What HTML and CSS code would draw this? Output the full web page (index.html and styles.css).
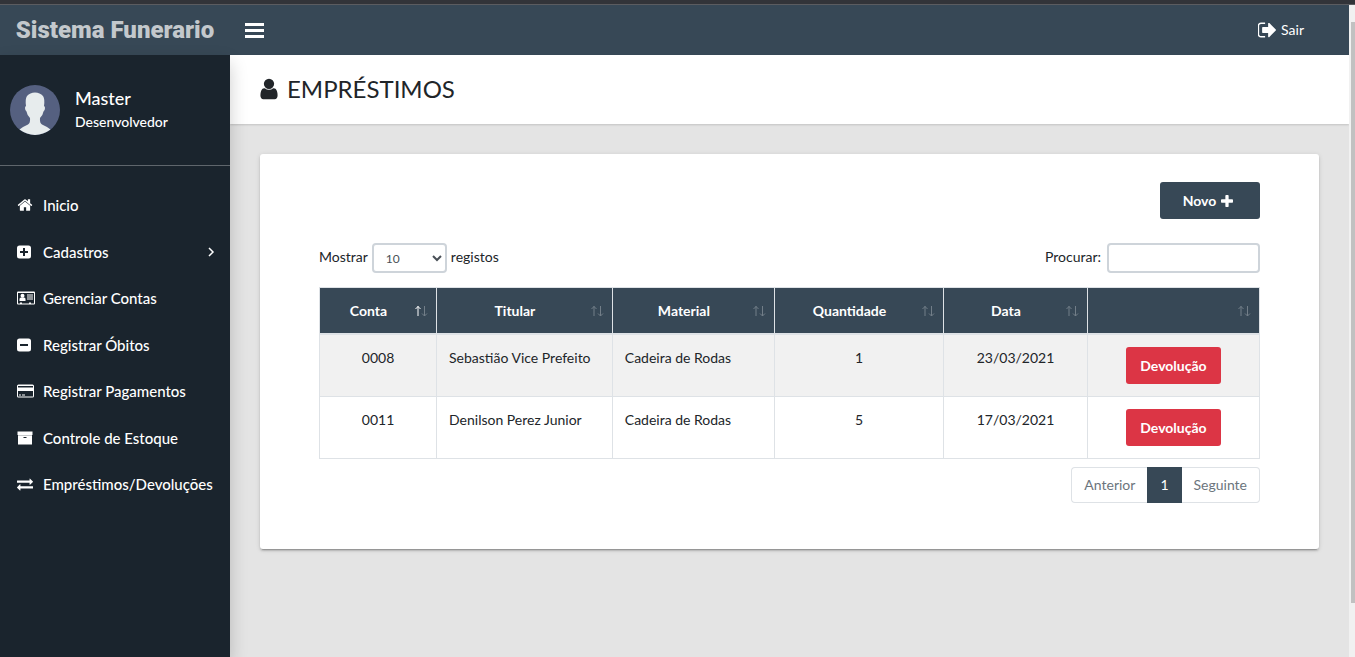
FILE: index.html
```html
<!DOCTYPE html>
<html lang="pt">
<head>
<meta charset="utf-8">
<title>Sistema Funerario</title>
<link rel="stylesheet" href="styles.css">
</head>
<body>
<div class="window-edge"></div>
<div class="viewport">
  <div class="app">
    <header class="topbar">
      <a class="logo" href="#">Sistema Funerario</a>
      <button class="toggle" type="button" aria-label="Menu">
        <svg width="19" height="15" viewBox="0 0 19 15"><path d="M0 0h19v3H0zM0 6h19v3H0zM0 12h19v3H0z"/></svg>
      </button>
      <a class="logout" href="#">
        <svg width="18" height="18" viewBox="96 128 1536 1536"><path d="M704 1440q0 4 1 20t.5 26.5-3 23.500-10 19.500-20.500 6.500h-320q-119 0-203.500-84.500t-84.500-203.500v-704q0-119 84.500-203.500t203.500-84.500h320q13 0 22.500 9.500t9.500 22.500q0 4 1 20t.5 26.500-3 23.500-10 19.500-20.500 6.500h-320q-66 0-113 47t-47 113v704q0 66 47 113t113 47h312l11.500 1 11.500 3 8 5.500 7 9 2 13.500zm928-544q0 26-19 45l-544 544q-19 19-45 19t-45-19-19-45v-288h-448q-26 0-45-19t-19-45v-384q0-26 19-45t45-19h448v-288q0-26 19-45t45-19 45 19l544 544q19 19 19 45z"/></svg>
        <span>Sair</span>
      </a>
    </header>
    <div class="body">
      <aside class="sidebar">
        <div class="user">
          <svg class="avatar" viewBox="0 0 50 50"><circle cx="25" cy="25" r="25" fill="#556080"/><path d="M9.500 44.600q3.500-3 8.500-5.100 2.500-1.500 2-6.500-3-3-3.500-6.500-1.500-1-1.500-3.500 0-1.500 1-2-1-7 1-10Q20 7.500 25 7.500t8 3.500q2 3 1 10 1 .5 1 2 0 2.500-1.500 3.500-.5 3.500-3.500 6.500-.5 5 2 6.500 5 2.100 8.500 5.100Q33 50 25 50T9.500 44.600z" fill="#e7eced"/></svg>
          <div>
            <p class="user-name">Master</p>
            <p class="user-role">Desenvolvedor</p>
          </div>
        </div>
        <nav class="menu">
          <a href="#"><span class="ico"><svg width="16" height="16" viewBox="64 0 1664 1792"><path d="M1472 992v480q0 26-19 45t-45 19h-384v-384h-256v384h-384q-26 0-45-19t-19-45v-480q0-1 .5-3t.5-3l575-474 575 474q1 2 1 6zm223-69l-62 74q-8 9-21 11h-3q-13 0-21-7l-692-577-692 577q-12 8-24 7-13-2-21-11l-62-74q-8-10-7-23.500t11-21.500l719-599q32-26 76-26t76 26l244 204v-195q0-14 9-23t23-9h192q14 0 23 9t9 23v408l219 182q10 8 11 21.500t-7 23.500z"/></svg></span>Inicio</a>
          <a href="#"><span class="ico"><svg width="14" height="14" viewBox="0 0 14 14"><path fill-rule="evenodd" d="M2.500 0.500h9q2.500 0 2.500 2.500v8q0 2.500-2.500 2.500h-9Q0 13.500 0 11V3Q0 .5 2.500.5zM6 3v3H3v2h3v3h2V8h3V6H8V3z"/></svg></span>Cadastros
            <svg class="chevron" width="8" height="12" viewBox="0 0 8 12"><path d="M2 2l4 4-4 4" fill="none" stroke="#fff" stroke-width="1.500"/></svg></a>
          <a href="#"><span class="ico"><svg width="18" height="14" viewBox="0 0 18 14"><path fill-rule="evenodd" d="M1 .5h16q1 0 1 1v11q0 1-1 1H1q-1 0-1-1v-11q0-1 1-1zM1 2v10.500h2v-1h2v1h7v-1h2v1h3V2z"/><circle cx="5.500" cy="4.800" r="2"/><path d="M2.500 10V8q0-1.500 1.500-1.500h3Q8.500 6.500 8.500 8v2zM10 3.500h6v1h-6zM10 5.500h6v1h-6zM10 7.500h6v1h-6z"/></svg></span>Gerenciar Contas</a>
          <a href="#"><span class="ico"><svg width="14" height="14" viewBox="0 0 14 14"><path fill-rule="evenodd" d="M2.500 .5h9q2.500 0 2.500 2.500v8q0 2.500-2.500 2.500h-9Q0 13.500 0 11V3Q0 .5 2.500.5zM3 6v2h8V6z"/></svg></span>Registrar Óbitos</a>
          <a href="#"><span class="ico"><svg width="17" height="14" viewBox="0 0 17 14"><path fill-rule="evenodd" d="M1.500 .5h14q1.500 0 1.500 1.500v10q0 1.500-1.500 1.500h-14Q0 13.500 0 12V2Q0 .5 1.500 .5zM1 2v1.500h15V2zM1 7v5.500h15V7zM2 10.500h2v1H2zM5 10.500h3v1H5z"/></svg></span>Registrar Pagamentos</a>
          <a href="#"><span class="ico"><svg width="16" height="14" viewBox="0 0 16 14"><path fill-rule="evenodd" d="M.5 .5h15v3.500H.5zM1 4.300h14v9.200H1zM6.500 6v1h3V6z"/></svg></span>Controle de Estoque</a>
          <a href="#"><span class="ico"><svg width="16" height="16" viewBox="0 0 1792 1792"><path d="M1792 1184v192q0 13-9.500 22.500t-22.500 9.500h-1376v192q0 13-9.500 22.500t-22.500 9.500q-12 0-24-10l-319-320q-9-9-9-22 0-14 9-23l320-320q9-9 23-9 13 0 22.500 9.500t9.500 22.500v192h1376q13 0 22.500 9.500t9.500 22.500zm0-544q0 14-9 23l-320 320q-9 9-23 9-13 0-22.500-9.500t-9.500-22.500v-192h-1376q-13 0-22.500-9.500t-9.500-22.500v-192q0-13 9.500-22.500t22.500-9.500h1376v-192q0-14 9-23t23-9q12 0 24 10l319 319q9 9 9 23z"/></svg></span>Empréstimos/Devoluções</a>
        </nav>
      </aside>
      <main class="content">
        <div class="title-bar">
          <h1><svg width="18" height="24" viewBox="256 0 1280 1792"><path d="M1536 1399q0 109-62.500 187t-150.500 78h-854q-88 0-150.500-78t-62.500-187q0-85 8.500-160.500t31.500-152 58.500-131 94-89 134.500-34.500q131 128 313 128t313-128q76 0 134.500 34.500t94 89 58.500 131 31.500 152 8.500 160.500zm-256-887q0 159-112.500 271.500t-271.500 112.500-271.500-112.500-112.500-271.500 112.500-271.500 271.500-112.500 271.500 112.500 112.500 271.500z"/></svg>EMPRÉSTIMOS</h1>
        </div>
        <section class="tile">
          <div class="actions">
            <button class="btn btn-new" type="button">Novo <svg width="12" height="12" viewBox="192 128 1408 1408"><path d="M1600 736v192q0 40-28 68t-68 28h-416v416q0 40-28 68t-68 28h-192q-40 0-68-28t-28-68v-416h-416q-40 0-68-28t-28-68v-192q0-40 28-68t68-28h416v-416q0-40 28-68t68-28h192q40 0 68 28t28 68v416h416q40 0 68 28t28 68z"/></svg></button>
          </div>
          <div class="filters">
            <label>Mostrar <select class="field length"><option>10</option><option>25</option><option>50</option></select> registos</label>
            <label class="search">Procurar: <input class="field" type="search"></label>
          </div>
          <table class="grid">
            <colgroup><col class="c-conta"><col class="c-titular"><col class="c-material"><col class="c-qtd"><col class="c-data"><col></colgroup>
            <thead>
              <tr>
                <th><div class="th asc"><span>Conta</span><svg viewBox="0 0 13 12"><path class="up" d="M3 1v10M.5 4L3 1.500 5.500 4"/><path class="down" d="M9.500 1v10M7 8.500L9.500 11 12 8.500"/></svg></div></th>
                <th><div class="th"><span>Titular</span><svg viewBox="0 0 13 12"><path class="up" d="M3 1v10M.5 4L3 1.500 5.500 4"/><path class="down" d="M9.500 1v10M7 8.500L9.500 11 12 8.500"/></svg></div></th>
                <th><div class="th"><span>Material</span><svg viewBox="0 0 13 12"><path class="up" d="M3 1v10M.5 4L3 1.500 5.500 4"/><path class="down" d="M9.500 1v10M7 8.500L9.500 11 12 8.500"/></svg></div></th>
                <th><div class="th"><span>Quantidade</span><svg viewBox="0 0 13 12"><path class="up" d="M3 1v10M.5 4L3 1.500 5.500 4"/><path class="down" d="M9.500 1v10M7 8.500L9.500 11 12 8.500"/></svg></div></th>
                <th><div class="th"><span>Data</span><svg viewBox="0 0 13 12"><path class="up" d="M3 1v10M.5 4L3 1.500 5.500 4"/><path class="down" d="M9.500 1v10M7 8.500L9.500 11 12 8.500"/></svg></div></th>
                <th><div class="th"><span></span><svg viewBox="0 0 13 12"><path class="up" d="M3 1v10M.5 4L3 1.500 5.500 4"/><path class="down" d="M9.500 1v10M7 8.500L9.500 11 12 8.500"/></svg></div></th>
              </tr>
            </thead>
            <tbody>
              <tr><td>0008</td><td class="left">Sebastião Vice Prefeito</td><td class="left">Cadeira de Rodas</td><td>1</td><td>23/03/2021</td><td><button class="btn btn-danger" type="button">Devolução</button></td></tr>
              <tr><td>0011</td><td class="left">Denilson Perez Junior</td><td class="left">Cadeira de Rodas</td><td>5</td><td>17/03/2021</td><td><button class="btn btn-danger" type="button">Devolução</button></td></tr>
            </tbody>
          </table>
          <nav class="pager">
            <a href="#">Anterior</a><a class="active" href="#">1</a><a href="#">Seguinte</a>
          </nav>
        </section>
      </main>
    </div>
  </div>
  <div class="scroll-track"><div class="scroll-thumb"></div></div>
</div>
</body>
</html>
```
FILE: styles.css
```css
* { box-sizing: border-box; }

body {
  margin: 0;
  height: 100vh;
  display: flex;
  flex-direction: column;
  overflow: hidden;
  background: #e4e4e4;
  color: #212529;
  font: 14px/21px Lato, sans-serif;
}

a { color: inherit; text-decoration: none; }
p, h1 { margin: 0; }
svg { fill: currentColor; flex: none; }
button, select, input { font-family: inherit; }

.window-edge {
  flex: none;
  height: 5px;
  background: #323439;
  border-bottom: 1px solid #5b5c60;
}

.viewport { flex: 1; display: flex; min-height: 0; }
.app { flex: 1; display: flex; flex-direction: column; min-width: 0; }

.scroll-track {
  width: 6px;
  padding: 17px 0 54px 2px;
  background: #f1f1f1;
  display: flex;
}
.scroll-thumb { flex: 1; background: #c1c1c1; }

.topbar {
  flex: none;
  height: 50px;
  display: flex;
  align-items: center;
  padding-right: 45px;
  background: #374856;
  color: #fff;
}
.logo {
  width: 230px;
  text-align: center;
  color: #c3c8cc;
  font: 900 24px/50px Roboto, sans-serif;
  white-space: nowrap;
}
.toggle {
  display: flex;
  padding: 10px 15px;
  border: 0;
  background: none;
  color: #fff;
}
.logout { margin-left: auto; display: flex; align-items: center; gap: 5px; }
.logout span { padding-bottom: 2px; }

.body { flex: 1; display: flex; min-height: 0; }

.sidebar {
  position: relative;
  flex: none;
  width: 230px;
  background: #1a242d;
  color: #fff;
  box-shadow: 0 8px 17px rgba(0, 0, 0, 0.2);
}
.user {
  display: flex;
  align-items: flex-start;
  gap: 15px;
  padding: 30px 10px;
  border-bottom: 1px solid #5f666c;
}
.avatar { width: 50px; height: 50px; }
.user-name { font-size: 18px; line-height: 26px; font-weight: 500; }
.user-role { font-size: 14px; font-weight: 500; }

.menu { padding-top: 16px; }
.menu a {
  display: flex;
  align-items: center;
  padding: 12px 15px 12px 17px;
  font-size: 15px;
  font-weight: 500;
  line-height: 1.5;
  white-space: nowrap;
}
.ico { width: 26px; display: flex; }
.chevron { margin-left: auto; }

.content { flex: 1; min-width: 0; }
.title-bar {
  padding: 19px 30px 21px;
  background: #fff;
  box-shadow: 0 1px 2px rgba(0, 0, 0, 0.15);
}
.title-bar h1 {
  display: flex;
  align-items: center;
  gap: 9px;
  font-size: 24px;
  line-height: 29px;
  font-weight: 400;
}

.tile {
  margin: 30px;
  padding: 28px 59px 46px;
  background: #fff;
  border-radius: 3px;
  box-shadow: 0 2px 2px rgba(0, 0, 0, 0.14), 0 3px 1px -2px rgba(0, 0, 0, 0.2), 0 1px 5px rgba(0, 0, 0, 0.12);
}
.actions { display: flex; justify-content: flex-end; }

.btn {
  height: 37px;
  border: 0;
  border-radius: 3px;
  color: #fff;
  font-size: 14px;
  font-weight: 700;
}
.btn-new {
  min-width: 100px;
  display: flex;
  align-items: center;
  justify-content: center;
  gap: 5px;
  padding: 0 24px 0 20px;
  background: #374856;
}
.btn-danger { padding: 0 14px; background: #dc3545; vertical-align: top; }

.filters {
  display: flex;
  justify-content: space-between;
  margin: 24px 0 14px;
}
.filters label { display: flex; gap: 4px; line-height: 28px; }
.filters .search { gap: 6px; }
.field {
  width: 153px;
  height: 30px;
  border: 2px solid #ced4da;
  border-radius: 4px;
  background: #fff;
  color: #495057;
  font-size: 12px;
}
.length { width: 75px; padding: 0 0 0 8px; }

.grid {
  width: 100%;
  table-layout: fixed;
  border-collapse: collapse;
}
.c-conta { width: 12.45%; }
.c-titular { width: 18.7%; }
.c-material { width: 17.25%; }
.c-qtd { width: 18%; }
.c-data { width: 15.3%; }
.grid th, .grid td { border: 1px solid #dee2e6; padding: 12px; }
.grid th { padding: 12px 8px; background: #374856; color: #fff; border-bottom-width: 2px; }
.grid td { text-align: center; vertical-align: top; white-space: nowrap; }
.grid .left { text-align: left; }
.grid tbody tr:nth-child(odd) { background: #f1f1f1; }

.th { display: flex; align-items: center; }
.th span { flex: 1; text-align: center; padding-right: 6px; }
.th svg { width: 13px; height: 12px; fill: none; stroke: #727e88; }
.asc .up { stroke: #fff; }

.pager { display: flex; justify-content: flex-end; margin-top: 8px; color: #6c757d; }
.pager a {
  padding: 7px 12px;
  border: 1px solid #dee2e6;
  line-height: 20px;
}
.pager a:first-child { border-right: 0; border-radius: 4px 0 0 4px; }
.pager a:last-child { border-left: 0; border-radius: 0 4px 4px 0; }
.pager .active { background: #374856; border-color: #374856; color: #fff; }
```
